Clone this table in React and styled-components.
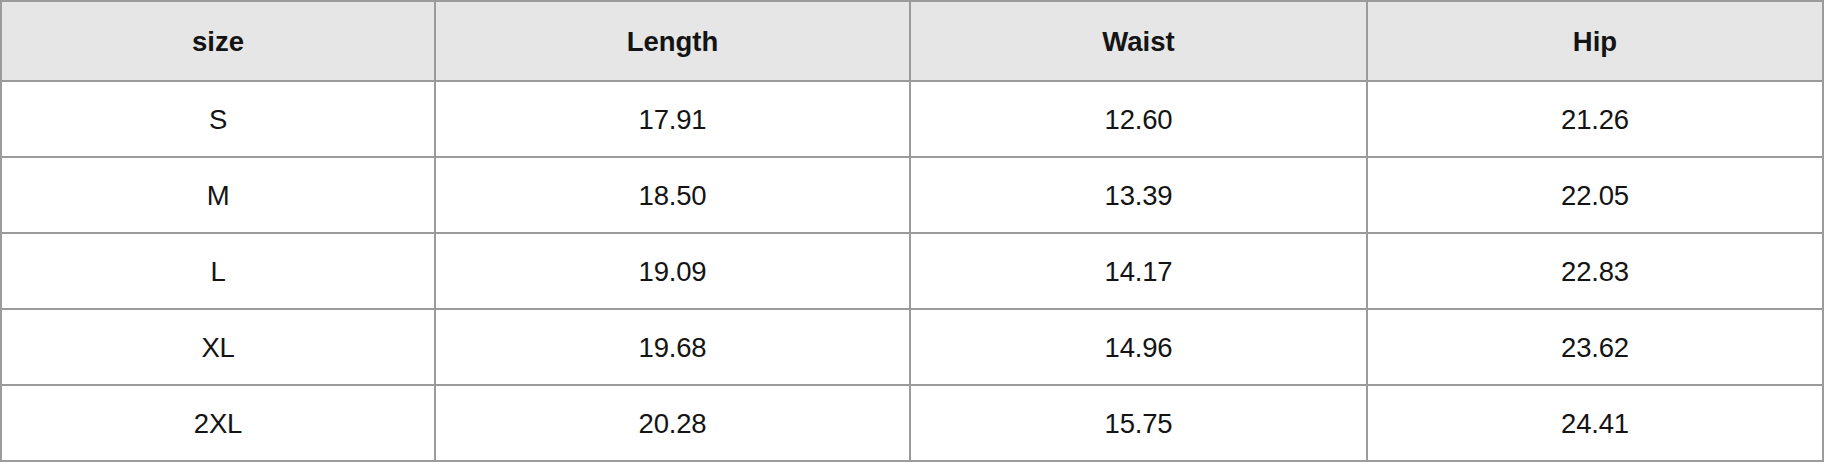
import styled, { createGlobalStyle } from 'styled-components'

const GlobalStyle = createGlobalStyle`
	html, body {
		margin: 0;
		padding: 0;
		background: #fff;
	}
	body {
		font-family: "Liberation Sans", Arial, sans-serif;
		color: #141414;
	}
`

const Table = styled.div`
	display: grid;
	grid-template-columns: 432px 473px 455px 454px;
	grid-auto-rows: 74px;
	grid-template-rows: 78px;
	gap: 2px;
	padding: 2px;
	width: 1824px;
	box-sizing: border-box;
	background: #9b9b9b;
`

const Cell = styled.div`
	display: flex;
	align-items: center;
	justify-content: center;
	background: ${props => (props.$head ? '#e6e6e6' : '#fff')};
	font-size: 27.5px;
	font-weight: ${props => (props.$head ? 700 : 400)};
	letter-spacing: ${props => (props.$head ? '0' : '-0.2px')};
	padding-top: 1px;
`

const columns = ['size', 'Length', 'Waist', 'Hip']

const rows = [
	['S', '17.91', '12.60', '21.26'],
	['M', '18.50', '13.39', '22.05'],
	['L', '19.09', '14.17', '22.83'],
	['XL', '19.68', '14.96', '23.62'],
	['2XL', '20.28', '15.75', '24.41'],
]

export default function App() {
	return (
		<>
			<GlobalStyle />
			<Table>
				{columns.map(name => (
					<Cell key={name} $head>{name}</Cell>
				))}
				{rows.map(row =>
					row.map((value, i) => (
						<Cell key={row[0] + i}>{value}</Cell>
					))
				)}
			</Table>
		</>
	)
}
